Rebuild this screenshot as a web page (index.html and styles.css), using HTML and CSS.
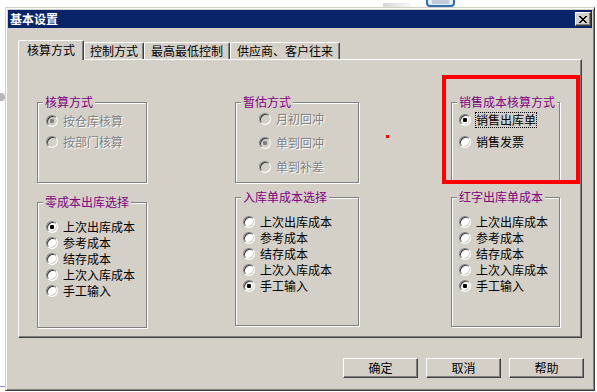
FILE: index.html
```html
<!DOCTYPE html>
<html lang="zh-CN">
<head>
<meta charset="utf-8">
<title>基本设置</title>
<link rel="stylesheet" href="styles.css">
</head>
<body>
<svg class="desktop" width="597" height="392" viewBox="0 0 597 392" aria-hidden="true">
  <defs>
    <linearGradient id="gbar" x1="0" x2="1" y1="0" y2="0">
      <stop offset="0" stop-color="#d8d8d8"/>
      <stop offset="1" stop-color="#f8f8f8"/>
    </linearGradient>
  </defs>
  <rect x="383" y="3" width="28" height="5" fill="url(#gbar)"/>
  <rect x="427" y="-5" width="27" height="11" rx="3" fill="#e4ecf5" stroke="#2f6db5" stroke-width="2"/>
  <path d="M432 1h17M432 3h17" stroke="#9aa8b8" stroke-width="1"/>
  <path d="M0 93h3l3 4-3 4H0z" fill="#b8b8b8"/>
  <rect x="0" y="386" width="5" height="1" fill="#8c8cc8"/>
</svg>

<div class="window">
  <div class="titlebar">
    <span class="title">基本设置</span>
    <span class="close">
      <svg width="8" height="7" viewBox="0 0 8 7" shape-rendering="crispEdges"><path d="M0 0h2v1H0zM6 0h2v1H6zM1 1h2v1H1zM5 1h2v1H5zM2 2h4v1H2zM3 3h2v1H3zM2 4h4v1H2zM1 5h2v1H1zM5 5h2v1H5zM0 6h2v1H0zM6 6h2v1H6z" fill="#000"/></svg>
    </span>
  </div>

  <div class="content">
    <div class="tabs">
      <div class="tab tab-active">核算方式</div>
      <div class="tab tab-tight">控制方式</div>
      <div class="tab">最高最低控制</div>
      <div class="tab">供应商、客户往来</div>
    </div>

    <div class="panel">
      <fieldset class="group col-a g-calc">
        <legend>核算方式</legend>
        <div class="opts">
          <div class="opt opt-disabled"><span class="radio on"></span><span class="label">按仓库核算</span></div>
          <div class="opt opt-disabled"><span class="radio"></span><span class="label">按部门核算</span></div>
        </div>
      </fieldset>

      <fieldset class="group col-b g-est">
        <legend>暂估方式</legend>
        <div class="opts">
          <div class="opt opt-disabled"><span class="radio"></span><span class="label">月初回冲</span></div>
          <div class="opt opt-disabled"><span class="radio on"></span><span class="label">单到回冲</span></div>
          <div class="opt opt-disabled"><span class="radio"></span><span class="label">单到补差</span></div>
        </div>
      </fieldset>

      <fieldset class="group col-c g-sale">
        <legend>销售成本核算方式</legend>
        <div class="opts">
          <div class="opt"><span class="radio on"></span><span class="label label-focus">销售出库单</span></div>
          <div class="opt"><span class="radio"></span><span class="label">销售发票</span></div>
        </div>
      </fieldset>

      <fieldset class="group col-a g-zero">
        <legend>零成本出库选择</legend>
        <div class="opts">
          <div class="opt"><span class="radio on"></span><span class="label">上次出库成本</span></div>
          <div class="opt"><span class="radio"></span><span class="label">参考成本</span></div>
          <div class="opt"><span class="radio"></span><span class="label">结存成本</span></div>
          <div class="opt"><span class="radio"></span><span class="label">上次入库成本</span></div>
          <div class="opt"><span class="radio"></span><span class="label">手工输入</span></div>
        </div>
      </fieldset>

      <fieldset class="group col-b g-in">
        <legend>入库单成本选择</legend>
        <div class="opts">
          <div class="opt"><span class="radio"></span><span class="label">上次出库成本</span></div>
          <div class="opt"><span class="radio"></span><span class="label">参考成本</span></div>
          <div class="opt"><span class="radio"></span><span class="label">结存成本</span></div>
          <div class="opt"><span class="radio"></span><span class="label">上次入库成本</span></div>
          <div class="opt"><span class="radio on"></span><span class="label">手工输入</span></div>
        </div>
      </fieldset>

      <fieldset class="group col-c g-red">
        <legend>红字出库单成本</legend>
        <div class="opts">
          <div class="opt"><span class="radio"></span><span class="label">上次出库成本</span></div>
          <div class="opt"><span class="radio"></span><span class="label">参考成本</span></div>
          <div class="opt"><span class="radio"></span><span class="label">结存成本</span></div>
          <div class="opt"><span class="radio"></span><span class="label">上次入库成本</span></div>
          <div class="opt"><span class="radio on"></span><span class="label">手工输入</span></div>
        </div>
      </fieldset>

      <div class="mark-box"></div>
      <div class="mark-dot"></div>
    </div>

    <div class="actions">
      <button class="btn" type="button">确定</button>
      <button class="btn" type="button">取消</button>
      <button class="btn" type="button">帮助</button>
    </div>
  </div>
</div>
</body>
</html>
```

FILE: styles.css
```css
html, body {
  margin: 0;
}

body {
  position: relative;
  width: 597px;
  height: 392px;
  box-sizing: border-box;
  padding: 7px 0 0 5px;
  overflow: hidden;
  background: #fff;
  font-family: "Noto Sans CJK SC", "Noto Sans", sans-serif;
  font-size: 12px;
  color: #000;
}

.desktop {
  position: absolute;
  left: 0;
  top: 0;
}

.window {
  position: relative;
  z-index: 1;
  width: 590px;
  height: 384px;
  box-sizing: border-box;
  padding: 2px;
  background: #d4d0c8;
  border: 1px solid;
  border-color: #d4d0c8 #404040 #404040 #d4d0c8;
  box-shadow: inset 1px 1px 0 #fff, inset -1px -1px 0 #808080;
  display: flex;
  flex-direction: column;
}

.titlebar {
  flex: none;
  height: 18px;
  background: #0a246a;
  display: flex;
  align-items: center;
  justify-content: space-between;
  padding: 0 1px 0 2px;
}

.title {
  color: #fff;
  font-weight: bold;
  font-size: 12px;
  line-height: 18px;
}

.close {
  width: 16px;
  height: 14px;
  box-sizing: border-box;
  background: #d4d0c8;
  border: 1px solid;
  border-color: #fff #404040 #404040 #fff;
  box-shadow: inset -1px -1px 0 #808080;
  display: flex;
  align-items: center;
  justify-content: center;
}

.close svg {
  display: block;
}

.content {
  flex: 1;
  display: flex;
  flex-direction: column;
  padding: 12px 10px 0 10px;
}

.tabs {
  position: relative;
  z-index: 2;
  height: 19px;
  display: flex;
  align-items: flex-end;
}

.tab {
  height: 17px;
  box-sizing: border-box;
  padding: 0 6px;
  border-top: 1px solid #fff;
  border-left: 1px solid #fff;
  border-right: 1px solid #404040;
  border-radius: 2px 2px 0 0;
  box-shadow: inset -1px 0 0 #808080;
  background: #d4d0c8;
  line-height: 15px;
  white-space: nowrap;
}

.tab-tight {
  padding: 0 5px;
}

.tab-active {
  height: 20px;
  margin-bottom: -1px;
  padding: 0 8px;
  line-height: 17px;
}

.panel {
  position: relative;
  height: 279px;
  box-sizing: border-box;
  border: 1px solid;
  border-color: #fff #404040 #404040 #fff;
  box-shadow: inset -1px -1px 0 #808080;
  padding: 35px 0 0 18px;
  display: grid;
  grid-template-columns: 110px 88px 124px 92px 109px;
  grid-template-rows: 88px 137px;
  row-gap: 7px;
  align-items: start;
}

.group {
  margin: 0;
  padding: 0;
  min-width: 0;
  box-sizing: border-box;
  border: 1px solid #808080;
  box-shadow: inset 1px 1px 0 #fff, 1px 1px 0 #fff;
}

.group legend {
  margin-left: 5px;
  padding: 0 2px;
  background: #d4d0c8;
  color: #800080;
  font-size: 12px;
  line-height: 14px;
  white-space: nowrap;
}

.col-a { grid-column: 1; }
.col-b { grid-column: 3; }
.col-c { grid-column: 5; }

.g-calc, .g-est, .g-sale { height: 88px; }
.g-zero { height: 133px; margin-top: 5px; }
.g-in { height: 136px; }
.g-red { height: 137px; }

.opts {
  display: flex;
  flex-direction: column;
}

.g-calc .opts { padding: 5px 0 0 8px; row-gap: 7px; }
.g-est .opts { padding: 3px 0 0 23px; row-gap: 10px; }
.g-sale .opts { padding: 4px 0 0 7px; row-gap: 8px; }
.g-zero .opts { padding: 11px 0 0 8px; row-gap: 2px; }
.g-in .opts { padding: 11px 0 0 7px; row-gap: 2px; }
.g-red .opts { padding: 11px 0 0 7px; row-gap: 2px; }

.opt {
  height: 14px;
  display: flex;
  align-items: center;
  gap: 5px;
  white-space: nowrap;
}

.label {
  line-height: 14px;
}

.label-focus {
  outline: 1px dotted #000;
}

.radio {
  flex: none;
  width: 12px;
  height: 12px;
  box-sizing: border-box;
  border-radius: 50%;
  border: 1px solid;
  border-color: #808080 #fff #fff #808080;
  box-shadow: inset 1px 1px 0 #404040, inset -1px -1px 0 #d4d0c8;
  background: #fff;
}

.radio.on {
  background: radial-gradient(circle at center, #000 0 2px, #fff 2.4px);
}

.opt-disabled .label {
  color: #808080;
  text-shadow: 1px 1px 0 #fff;
}

.opt-disabled .radio {
  background: #d4d0c8;
}

.opt-disabled .radio.on {
  background: radial-gradient(circle at center, #808080 0 2px, #d4d0c8 2.4px);
}

.mark-box {
  position: absolute;
  left: 423px;
  top: 15px;
  width: 138px;
  height: 109px;
  box-sizing: border-box;
  border: 4px solid #ff0000;
}

.mark-dot {
  position: absolute;
  left: 367px;
  top: 75px;
  width: 3px;
  height: 3px;
  background: #ff0000;
}

.actions {
  display: flex;
  justify-content: flex-end;
  gap: 8px;
  margin: 20px -2px 0 0;
}

.btn {
  width: 75px;
  height: 20px;
  box-sizing: border-box;
  margin: 0;
  padding: 0;
  background: #d4d0c8;
  border: 1px solid;
  border-color: #fff #404040 #404040 #fff;
  box-shadow: inset -1px -1px 0 #808080;
  font-family: inherit;
  font-size: 12px;
  line-height: 16px;
  color: #000;
}
```
